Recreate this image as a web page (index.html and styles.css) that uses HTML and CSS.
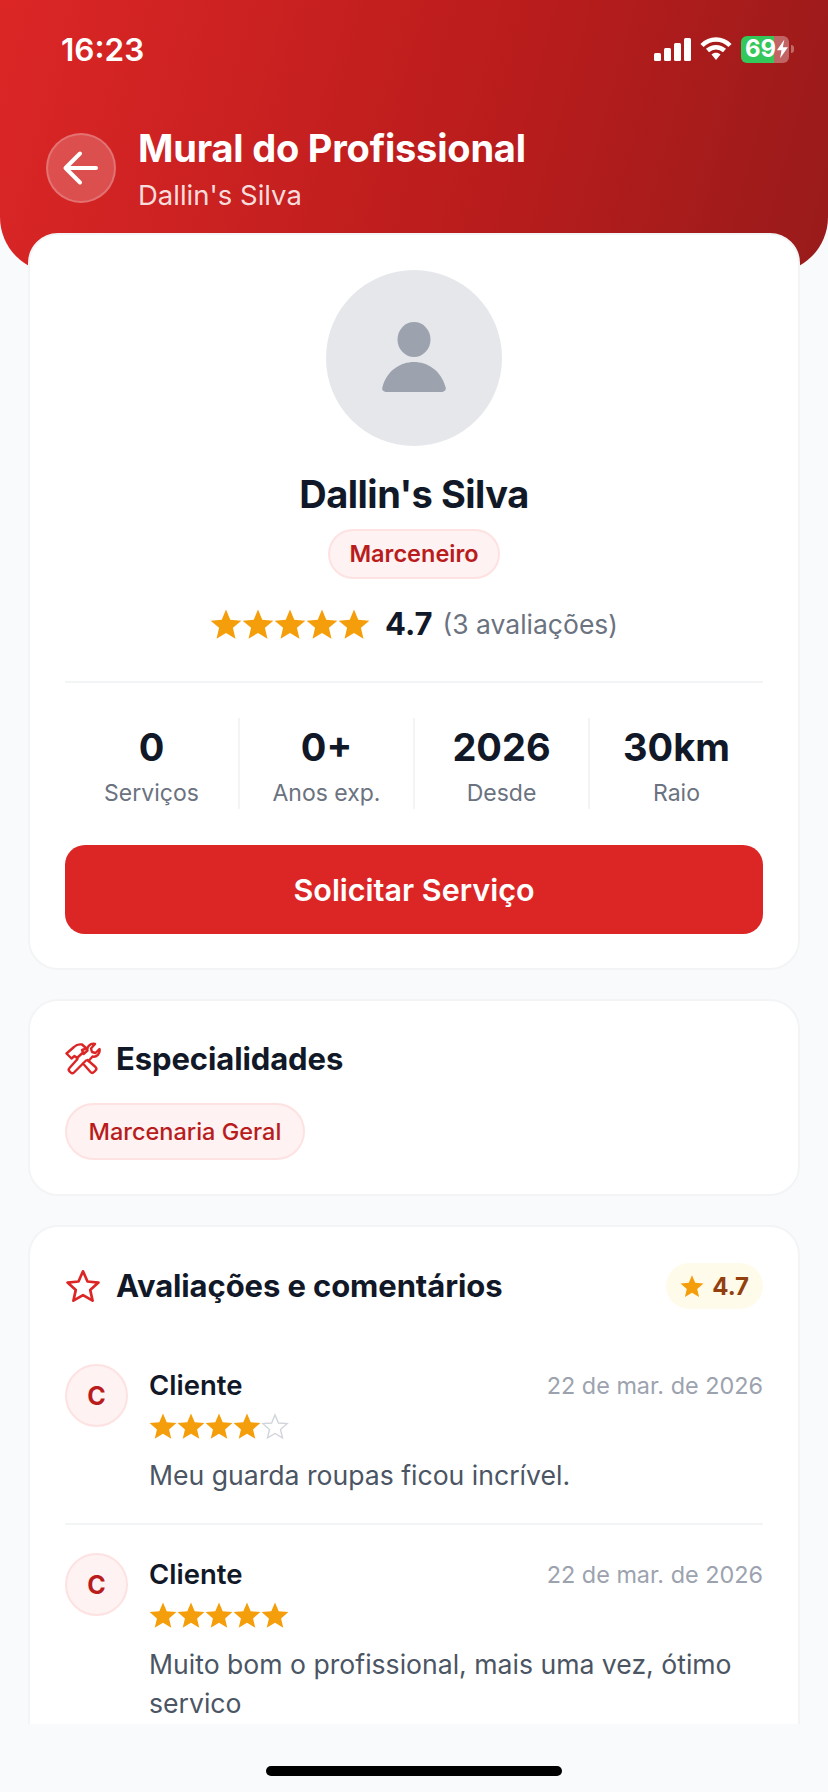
FILE: index.html
```html
<!DOCTYPE html>
<html lang="pt-BR">
<head>
  <meta charset="UTF-8" />
  <meta name="viewport" content="width=device-width, initial-scale=1.0" />
  <title>Mural do Profissional</title>
  <link rel="stylesheet" href="styles.css">
</head>
<body>
  <svg class="defs" width="0" height="0">
    <symbol id="star" viewBox="0 0 24 24">
      <path d="M12 1.200l3.200 7.600 8.300.7-6.300 5.400 1.900 8.100L12 18.700 4.900 23l1.900-8.100L.5 9.500l8.300-.7z" />
    </symbol>
  </svg>

  <div class="screen">
    <div class="hero">
      <div class="status-bar">
        <span class="clock">16:23</span>
        <div class="status-icons">
          <svg class="signal" width="37" height="23" viewBox="0 0 37 23">
            <rect x="0" y="15" width="7" height="8" rx="1.500" />
            <rect x="10" y="10" width="7" height="13" rx="1.500" />
            <rect x="20" y="5" width="7" height="18" rx="1.500" />
            <rect x="30" y="0" width="7" height="23" rx="1.500" />
          </svg>
          <svg class="wifi" width="32" height="24" viewBox="0 0 32 24">
            <path d="M2 8.500C10 .5 22 .5 30 8.500" />
            <path d="M7.500 13.500C12.500 9 19.500 9 24.500 13.500" />
            <path class="wifi-dot" d="M11.500 17.500C14 15.200 18 15.200 20.500 17.500L16 23z" />
          </svg>
          <div class="battery">
            <div class="battery-body">
              <span class="battery-level">69</span>
              <svg class="bolt" width="13" height="20" viewBox="0 0 14 20"><path d="M9 0L1 11.500h5L4.500 20 13 8H7.500z" /></svg>
            </div>
            <span class="battery-cap"></span>
          </div>
        </div>
      </div>

      <div class="hero-row">
        <button class="back-btn">
          <svg width="38" height="38" viewBox="0 0 38 38">
            <path d="M34 19H4M18 4.500L3.500 19 18 33.500" />
          </svg>
        </button>
        <div class="hero-text">
          <div class="hero-title">Mural do Profissional</div>
          <div class="hero-sub">Dallin's Silva</div>
        </div>
      </div>
    </div>

    <div class="content">
      <section class="card profile">
        <div class="avatar">
          <svg width="66" height="72" viewBox="0 0 66 72">
            <ellipse cx="33" cy="17.500" rx="16.500" ry="17.500" />
            <path d="M6 70C2 70 .5 67.500 1.500 65 6 48 20 40 33 40s27 8 31.500 25c1 2.500-.5 5-4.500 5z" />
          </svg>
        </div>
        <h1 class="name">Dallin's Silva</h1>
        <span class="chip chip-bold">Marceneiro</span>
        <div class="rating-row">
          <div class="stars stars-lg">
            <svg><use href="#star" /></svg>
            <svg><use href="#star" /></svg>
            <svg><use href="#star" /></svg>
            <svg><use href="#star" /></svg>
            <svg><use href="#star" /></svg>
          </div>
          <span class="rating-value">4.7</span>
          <span class="rating-count">(3 avaliações)</span>
        </div>
        <div class="stats">
          <div class="stat"><strong>0</strong><span>Serviços</span></div>
          <div class="stat"><strong>0+</strong><span>Anos exp.</span></div>
          <div class="stat"><strong>2026</strong><span>Desde</span></div>
          <div class="stat"><strong>30km</strong><span>Raio</span></div>
        </div>
        <button class="cta">Solicitar Serviço</button>
      </section>

      <section class="card">
        <div class="card-head">
          <svg class="head-icon" width="36" height="36" viewBox="0 0 36 36">
            <!-- hammer head -->
            <path d="M21.500 7.500L17 3.500c-3-.5-6 .5-8 2.500L1.500 12.500l5 5 3-2.500 2.500 2 6-5.500-1-2.500z" />
            <!-- hammer handle -->
            <path d="M12.500 18L4.500 27c-1 1-1 2.300 0 3.300l1.200 1.200c1 1 2.300 1 3.300 0L18 22.500" />
            <!-- wrench jaw -->
            <path d="M18.500 13l4-3.500c-1-3.500 2.500-7.500 7.500-6.500l-4 4.500 1 3.500 3.500 1 4-4c1 4.500-3 8.500-7 7.500l-4 4.500" />
            <!-- wrench handle -->
            <path d="M21 19.500l-3 3 7.500 8.500c1 1 2.500 1 3.500 0l1.500-1.500c1-1 1-2.500 0-3.500l-8-7" />
          </svg>
          <h2>Especialidades</h2>
        </div>
        <span class="chip chip-spec">Marcenaria Geral</span>
      </section>

      <section class="card reviews">
        <div class="card-head">
          <svg class="head-icon" width="36" height="36" viewBox="0 0 24 24">
            <path d="M12 2.200l3 6.800 7.300.7-5.500 4.900 1.600 7.200L12 18.100l-6.400 3.700 1.600-7.200L1.700 9.700 9 9z" />
          </svg>
          <h2>Avaliações e comentários</h2>
          <div class="score">
            <svg><use href="#star" /></svg>
            <span>4.7</span>
          </div>
        </div>

        <div class="review">
          <div class="review-avatar">C</div>
          <div class="review-body">
            <div class="review-top">
              <span class="review-name">Cliente</span>
              <span class="review-date">22 de mar. de 2026</span>
            </div>
            <div class="stars stars-sm">
              <svg><use href="#star" /></svg>
              <svg><use href="#star" /></svg>
              <svg><use href="#star" /></svg>
              <svg><use href="#star" /></svg>
              <svg class="star-empty" viewBox="0 0 24 24"><path d="M12 2.500l2.900 6.900 7.500.6-5.700 4.900 1.700 7.300L12 18.400l-6.400 3.800 1.700-7.300L1.600 10l7.500-.6z" /></svg>
            </div>
            <p class="review-text">Meu guarda roupas ficou incrível.</p>
          </div>
        </div>

        <div class="review">
          <div class="review-avatar">C</div>
          <div class="review-body">
            <div class="review-top">
              <span class="review-name">Cliente</span>
              <span class="review-date">22 de mar. de 2026</span>
            </div>
            <div class="stars stars-sm">
              <svg><use href="#star" /></svg>
              <svg><use href="#star" /></svg>
              <svg><use href="#star" /></svg>
              <svg><use href="#star" /></svg>
              <svg><use href="#star" /></svg>
            </div>
            <p class="review-text">Muito bom o profissional, mais uma vez, ótimo servico</p>
          </div>
        </div>
      </section>
    </div>

    <div class="home-area"><span class="home-bar"></span></div>
  </div>
</body>
</html>
```

FILE: styles.css
```css
* {
  box-sizing: border-box;
}

body {
  margin: 0;
  background: #f9fafb;
  font-family: Inter, "Liberation Sans", sans-serif;
  color: #111827;
}

.defs {
  position: absolute;
}

.screen {
  height: 1792px;
  display: flex;
  flex-direction: column;
  overflow: hidden;
}

/* red header */
.hero {
  height: 273px;
  flex-shrink: 0;
  padding: 0 46px;
  background: linear-gradient(105deg, #dc2626 0%, #b91c1c 60%, #991b1b 100%);
  border-radius: 0 0 56px 56px;
  color: white;
}

.status-bar {
  height: 98px;
  padding: 0 0 0 15px;
  margin-right: -12px;
  display: flex;
  align-items: center;
  justify-content: space-between;
}

.clock {
  font-size: 31.500px;
  font-weight: 600;
}

.status-icons {
  display: flex;
  align-items: center;
  gap: 9px;
}

.signal {
  fill: white;
}

.wifi {
  fill: none;
  stroke: white;
  stroke-width: 4.500;
}

.wifi-dot {
  fill: white;
  stroke: none;
}

.battery {
  display: flex;
  align-items: center;
  gap: 2px;
}

.battery-body {
  width: 48px;
  height: 27px;
  border-radius: 6px;
  display: flex;
  align-items: center;
  padding-left: 4px;
  background: linear-gradient(90deg, #34c759 69%, rgba(255, 255, 255, 0.32) 69%);
}

.battery-level {
  font-size: 24px;
  font-weight: 700;
  line-height: 1;
}

.bolt {
  fill: white;
}

.battery-cap {
  width: 3px;
  height: 8px;
  border-radius: 0 3px 3px 0;
  background: rgba(255, 255, 255, 0.35);
}

.hero-row {
  margin-top: 27px;
  display: flex;
  align-items: center;
  gap: 22px;
}

.back-btn {
  width: 70px;
  height: 70px;
  padding: 0;
  border: 2px solid rgba(255, 255, 255, 0.2);
  border-radius: 50%;
  background: rgba(255, 255, 255, 0.2);
  display: flex;
  align-items: center;
  justify-content: center;
}

.back-btn svg {
  fill: none;
  stroke: white;
  stroke-width: 4;
  stroke-linecap: round;
  stroke-linejoin: round;
}

.hero-title {
  font-size: 38px;
  font-weight: 700;
  line-height: 46px;
  letter-spacing: -0.2px;
}

.hero-sub {
  margin-top: 8px;
  font-size: 27.500px;
  line-height: 32px;
  color: rgba(255, 255, 255, 0.85);
}

/* cards */
.content {
  height: 1491px;
  flex-shrink: 0;
  margin-top: -40px;
  padding: 0 28px;
  display: flex;
  flex-direction: column;
  gap: 29px;
  overflow: hidden;
}

.card {
  flex-shrink: 0;
  padding: 35px 35px 34px;
  background: white;
  border: 2px solid #f3f4f6;
  border-radius: 30px;
}

.profile {
  display: flex;
  flex-direction: column;
  align-items: center;
}

.avatar {
  width: 176px;
  height: 176px;
  border-radius: 50%;
  background: #e5e7eb;
  display: flex;
  align-items: center;
  justify-content: center;
}

.avatar svg {
  fill: #9ca3af;
}

.name {
  margin: 25px 0 0;
  font-size: 38px;
  line-height: 46px;
  font-weight: 700;
  letter-spacing: -0.5px;
}

.chip {
  display: block;
  width: fit-content;
  border: 2px solid #fee2e2;
  border-radius: 999px;
  background: #fef2f2;
  color: #b91c1c;
  font-size: 23.500px;
}

.chip-bold {
  margin-top: 12px;
  padding: 0 19px;
  line-height: 46px;
  font-weight: 600;
}

.chip-spec {
  margin-top: 21px;
  padding: 0 21.500px;
  line-height: 53px;
  font-weight: 500;
}

.rating-row {
  width: 100%;
  margin-top: 26px;
  padding-bottom: 39px;
  border-bottom: 2px solid #f3f4f6;
  display: flex;
  align-items: center;
  justify-content: center;
}

.stars {
  display: flex;
}

.stars svg {
  fill: #f59e0b;
}

.stars-lg svg {
  width: 32px;
  height: 32px;
}

.stars-sm svg {
  width: 28px;
  height: 28px;
}

.star-empty {
  fill: none !important;
  stroke: #d1d5db;
  stroke-width: 1.200;
}

.rating-value {
  margin-left: 15px;
  font-size: 31px;
  font-weight: 700;
}

.rating-count {
  margin-left: 10px;
  font-size: 26.500px;
  color: #6b7280;
}

.stats {
  width: 100%;
  margin-top: 35px;
  display: flex;
}

.stat {
  flex: 1;
  height: 91px;
  display: flex;
  flex-direction: column;
  align-items: center;
  border-right: 2px solid #f3f4f6;
}

.stat:last-child {
  border-right: none;
}

.stat strong {
  font-size: 38px;
  line-height: 58px;
  font-weight: 700;
}

.stat span {
  margin-top: 1px;
  font-size: 23px;
  line-height: 32px;
  color: #6b7280;
}

.cta {
  width: 100%;
  height: 89px;
  margin-top: 36px;
  border: none;
  border-radius: 20px;
  background: #dc2626;
  color: white;
  font-family: inherit;
  font-size: 30.500px;
  font-weight: 600;
}

.card-head {
  display: flex;
  align-items: center;
  gap: 15px;
}

.card-head h2 {
  margin: 0;
  flex: 1;
  font-size: 31px;
  line-height: 46px;
  font-weight: 700;
  letter-spacing: -0.1px;
}

.head-icon {
  fill: none;
  stroke: #dc2626;
  stroke-width: 2.400;
  stroke-linejoin: round;
  stroke-linecap: round;
}

.reviews {
  padding-top: 36px;
}

.reviews .head-icon {
  stroke-width: 1.800;
}

.score {
  height: 46px;
  padding: 0 14px;
  border-radius: 23px;
  background: #fffbeb;
  color: #92400e;
  font-size: 24px;
  font-weight: 700;
  display: flex;
  align-items: center;
  gap: 8px;
}

.score svg {
  width: 24px;
  height: 24px;
  fill: #f59e0b;
}

.review {
  padding: 28px 0;
  display: flex;
  gap: 21px;
  border-bottom: 2px solid #f3f4f6;
}

.card-head + .review {
  margin-top: 27px;
}

.review-avatar {
  width: 63px;
  height: 63px;
  flex-shrink: 0;
  border: 2px solid #fee2e2;
  border-radius: 50%;
  background: #fef2f2;
  color: #b91c1c;
  font-size: 25px;
  font-weight: 700;
  display: flex;
  align-items: center;
  justify-content: center;
}

.review-body {
  flex: 1;
}

.review-top {
  height: 42px;
  display: flex;
  align-items: center;
  justify-content: space-between;
}

.review-name {
  font-size: 27.500px;
  font-weight: 600;
}

.review-date {
  font-size: 23.400px;
  color: #9ca3af;
}

.review-body .stars {
  margin-top: 6px;
}

.review-text {
  margin: 16px 0 0;
  font-size: 26.600px;
  line-height: 39px;
  color: #4b5563;
}

.home-area {
  flex: 1;
  display: flex;
  justify-content: center;
  padding-top: 42px;
}

.home-bar {
  width: 296px;
  height: 10px;
  border-radius: 5px;
  background: black;
}
```
